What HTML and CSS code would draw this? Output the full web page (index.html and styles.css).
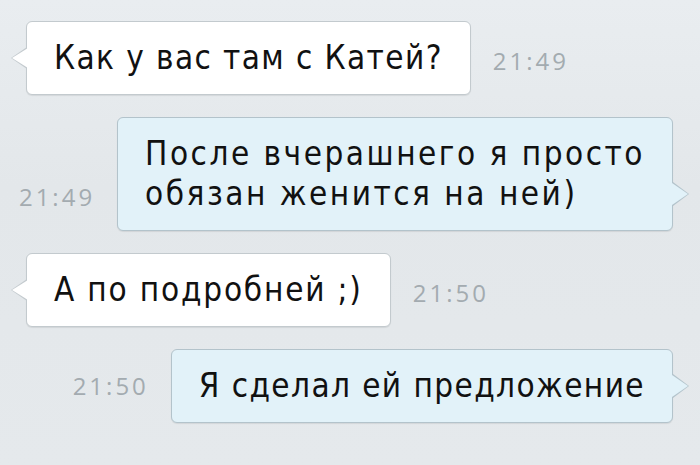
FILE: index.html
```html
<!DOCTYPE html>
<html lang="ru">
<head>
<meta charset="utf-8">
<link rel="stylesheet" href="styles.css">
</head>
<body>
<div class="chat">
  <div class="row in">
    <div class="bubble b1">Как у вас там с Катей?</div>
    <span class="time">21:49</span>
  </div>
  <div class="row out">
    <span class="time">21:49</span>
    <div class="bubble b2">После вчерашнего я просто<br>обязан женится на ней)</div>
  </div>
  <div class="row in">
    <div class="bubble b3">А по подробней ;)</div>
    <span class="time">21:50</span>
  </div>
  <div class="row out">
    <span class="time mid">21:50</span>
    <div class="bubble b4">Я сделал ей предложение</div>
  </div>
</div>
</body>
</html>
```
FILE: styles.css
```css
html, body {
  margin: 0;
  padding: 0;
}
body {
  width: 700px;
  height: 465px;
  overflow: hidden;
  background: linear-gradient(#e9edf0, #e3e7ea 40%, #e5e9ec);
  font-family: "DejaVu Sans", "Open Sans", sans-serif;
}
.chat {
  display: flex;
  flex-direction: column;
  gap: 22px;
  padding-top: 21px;
}
.row {
  display: flex;
  align-items: flex-end;
  gap: 22px;
}
.row.in {
  padding-left: 26px;
}
.row.out {
  justify-content: flex-end;
  padding-right: 27px;
}
.bubble {
  position: relative;
  padding: 16px 27px 16px 27px;
  font-family: "DejaVu Sans Condensed", "DejaVu Sans", sans-serif;
  font-stretch: condensed;
  font-size: 33px;
  line-height: 40px;
  letter-spacing: 1.4px;
  color: #111;
  border-radius: 6px;
  white-space: nowrap;
}
.bubble.b2 {
  letter-spacing: 2.5px;
}
.bubble.b3 {
  letter-spacing: 1.8px;
}
.bubble.b4 {
  letter-spacing: 1.4px;
}
.in .bubble {
  background: #fff;
  border: 1px solid #c3cace;
  box-shadow: 0 1px 1px rgba(0,0,0,0.08);
}
.out .bubble {
  background: #e2f2f9;
  border: 1px solid #b3c3cb;
  box-shadow: 0 1px 1px rgba(0,0,0,0.08);
}
.bubble::before,
.bubble::after {
  content: "";
  position: absolute;
}
.in .bubble::before {
  left: -16px;
  top: 25px;
  width: 16px;
  height: 22px;
  background: #c3cace;
  clip-path: polygon(100% 0, 0 50%, 100% 100%);
}
.in .bubble::after {
  left: -15px;
  top: 26px;
  width: 16px;
  height: 20px;
  background: #fff;
  clip-path: polygon(100% 0, 0 50%, 100% 100%);
}
.out .bubble::before {
  right: -17px;
  bottom: 24px;
  width: 16px;
  height: 24px;
  background: #b3c3cb;
  clip-path: polygon(0 0, 100% 50%, 0 100%);
}
.out .bubble::after {
  right: -16px;
  bottom: 25px;
  width: 16px;
  height: 22px;
  background: #e2f2f9;
  clip-path: polygon(0 0, 100% 50%, 0 100%);
}
.time {
  font-family: "Open Sans", sans-serif;
  font-size: 24px;
  line-height: 24px;
  color: #a3abb0;
  padding-bottom: 22px;
  letter-spacing: 3px;
}
.time.mid {
  align-self: center;
  padding-bottom: 0;
}
```
